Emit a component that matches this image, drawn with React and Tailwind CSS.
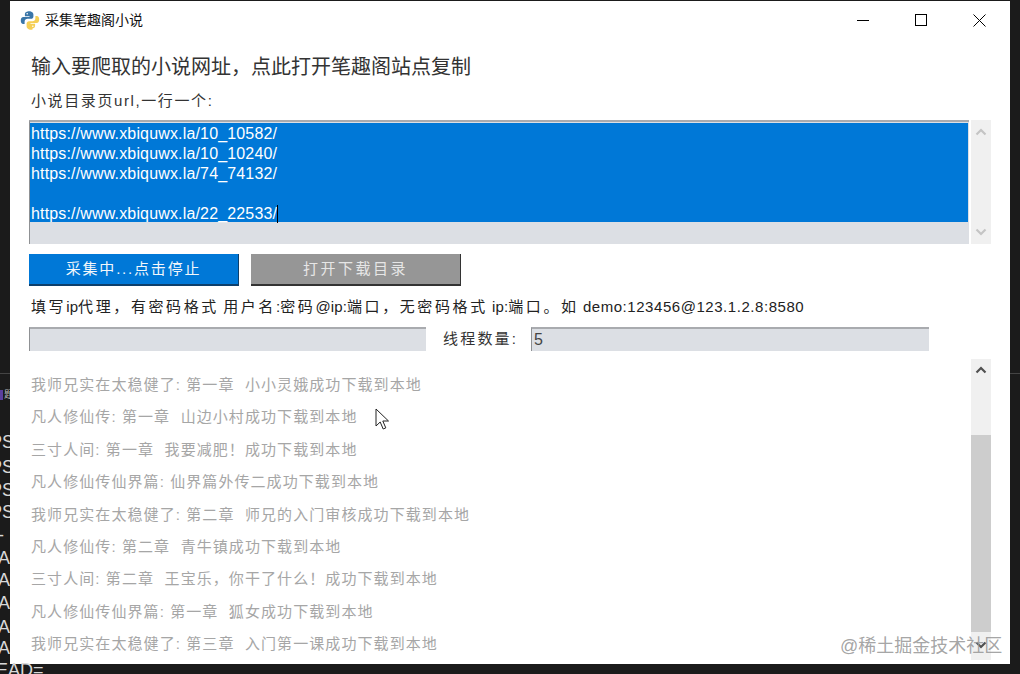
const cjk = "font-['Liberation_Sans','Noto_Sans_CJK_SC',sans-serif]";

const logLines = [
  "我师兄实在太稳健了: 第一章  小小灵娥成功下载到本地",
  "凡人修仙传: 第一章  山边小村成功下载到本地",
  "三寸人间: 第一章  我要减肥！成功下载到本地",
  "凡人修仙传仙界篇: 仙界篇外传二成功下载到本地",
  "我师兄实在太稳健了: 第二章  师兄的入门审核成功下载到本地",
  "凡人修仙传: 第二章  青牛镇成功下载到本地",
  "三寸人间: 第二章  王宝乐，你干了什么！成功下载到本地",
  "凡人修仙传仙界篇: 第一章  狐女成功下载到本地",
  "我师兄实在太稳健了: 第三章  入门第一课成功下载到本地",
];

const urls = [
  "https://www.xbiquwx.la/10_10582/",
  "https://www.xbiquwx.la/10_10240/",
  "https://www.xbiquwx.la/74_74132/",
  "",
  "https://www.xbiquwx.la/22_22533/",
];

const termRows = [
  ["PS", "h-[24px] -ml-[10px]"],
  ["PS", "h-[26px] -ml-[10px]"],
  ["PS", "h-[20px] -ml-[10px]"],
  ["PS", "h-[24px] -ml-[10px]"],
  ["-", "h-[22px] -ml-[2px]"],
  ["A", "h-[24px] -ml-[2px]"],
  ["A", "h-[20px] -ml-[2px]"],
  ["A", "h-[26px] -ml-[2px]"],
  ["A", "h-[22px] -ml-[2px]"],
  ["A", "h-[20px] -ml-[2px]"],
];

function PythonLogo() {
  return (
    <svg viewBox="0 0 20 20" className="h-[20px] w-[20px] shrink-0">
      <path d="M7.500 1.500c-2 .4-2.600 1.400-2.600 3v1.800h4.600v.8H3.400C1.600 7.100.8 8.600.8 10.500c0 2 .8 3.500 2.400 3.500h1.400v-2.200c0-1.700 1.400-3 3-3h3.400c1.300 0 2.400-1.100 2.400-2.400V4.500c0-1.400-1.200-2.600-2.600-3-1.100-.3-2.300-.2-3.300 0z" fill="#3a76a8" />
      <circle cx="7.200" cy="3.800" r="0.800" fill="#fff" />
      <path d="M12.500 18.500c2-.4 2.600-1.400 2.600-3v-1.800h-4.600v-.8h6.100c1.800 0 2.600-1.500 2.600-3.400 0-2-.8-3.500-2.400-3.500h-1.400v2.200c0 1.700-1.400 3-3 3H9c-1.300 0-2.400 1.100-2.400 2.400v2.900c0 1.400 1.200 2.600 2.600 3 1.100.3 2.300.2 3.300 0z" fill="#f5cf55" />
      <circle cx="12.800" cy="16.200" r="0.800" fill="#fff" />
    </svg>
  );
}

function Chevron({ down, color }) {
  return (
    <svg viewBox="0 0 12 8" className="h-[8px] w-[12px]" fill="none" stroke={color} strokeWidth="2.200">
      <path d={down ? "M1.500 1.500 6 6l4.500-4.500" : "M1.500 6.500 6 2l4.500 4.500"} />
    </svg>
  );
}

function GrayInput({ value, width }) {
  return (
    <div className={`h-[24px] ${width} border-t-2 border-l border-t-[#a9abaf] border-l-[#8f9194] bg-[#dcdfe4] pl-[2px] font-['Liberation_Sans',sans-serif] text-[16px] leading-[22px] text-[#444]`}>
      {value}
    </div>
  );
}

// CJK runs in this line sit wider apart than the latin ones
function Wide({ children }) {
  return <span className="tracking-[2.600px]">{children}</span>;
}

export default function App() {
  return (
    <div className={`relative flex h-[674px] w-[1020px] overflow-hidden bg-[#1b1b1b] ${cjk}`}>
      {/* terminal peeking out on the left */}
      <div className="flex w-[10px] shrink-0 flex-col overflow-hidden pt-[373px]">
        <div className="h-px w-full bg-[#444]" />
        <div className="mt-[16px] flex h-[10px] items-center gap-px">
          <div className="h-[10px] w-[3px] shrink-0 bg-[#5a3f9e]" />
          <span className="whitespace-nowrap text-[10px] leading-none text-[#b8b8b8]">题</span>
        </div>
        <div className="mt-[30px] flex flex-col text-[18px] text-[#d8d8d8]">
          {termRows.map(([t, h], i) => (
            <div key={i} className={`${h} flex items-center whitespace-nowrap leading-none`}>{t}</div>
          ))}
        </div>
      </div>

      <div className="mt-px flex h-[663px] w-[1000px] shrink-0 flex-col bg-white">
        {/* title bar */}
        <div className="flex h-[38px] shrink-0 items-center pl-[10px] pr-[2px]">
          <PythonLogo />
          <span className="ml-[5px] text-[14px] leading-none text-[#111]">采集笔趣阁小说</span>
          <div className="ml-auto flex h-full items-center">
            <div className="flex h-full w-[58px] items-center justify-center">
              <div className="h-px w-[12px] bg-black" />
            </div>
            <div className="flex h-full w-[58px] items-center justify-center">
              <div className="h-[12px] w-[12px] border border-black" />
            </div>
            <div className="flex h-full w-[58px] items-center justify-center">
              <svg viewBox="0 0 13 13" className="h-[13px] w-[13px]" stroke="#000" strokeWidth="1">
                <path d="M.500.500l12 12M12.500.500l-12 12" />
              </svg>
            </div>
          </div>
        </div>

        <div className="flex min-h-0 flex-1 flex-col pl-[19px]">
          <div className="ml-[2px] mt-[14px] h-[28px] text-[20px] leading-[28px] text-[#333]">
            输入要爬取的小说网址，点此打开笔趣阁站点复制
          </div>
          <div className="ml-[2px] mt-[9px] h-[22px] text-[15px] leading-[22px] tracking-[1.600px] text-[#333]">
            小说目录页url,一行一个:
          </div>

          {/* url box */}
          <div className="mt-[8px] flex h-[124px] gap-[2px]">
            <div className="flex h-full w-[940px] flex-col border-t-2 border-l border-t-[#a9abaf] border-l-[#8f9194] bg-[#dcdfe4]">
              <div className="mr-px mt-px h-[99px] bg-[#0078d7] pl-[1px] pt-[1px] font-['Liberation_Sans',sans-serif] text-[16px] leading-[20px] tracking-[0.160px] text-white">
                {urls.map((u, i) => (
                  <div key={i} className="flex h-[20px] items-center">
                    {u}
                    {i === 4 && <span className="h-[18px] w-px bg-black" />}
                  </div>
                ))}
              </div>
            </div>
            <div className="flex h-full w-[20px] flex-col items-center justify-between bg-[#f0f0f0] py-[8px]">
              <Chevron color="#c4c4c4" />
              <Chevron down color="#c4c4c4" />
            </div>
          </div>

          {/* buttons */}
          <div className="mt-[10px] flex h-[32px] gap-[12px]">
            <button className="h-full w-[210px] border-r border-b-2 border-r-[#0d3f6b] border-b-[#0d3f6b] bg-[#0078d7] text-[15px] tracking-[1.800px] text-[#f2f7fb]">
              采集中...点击停止
            </button>
            <button className="h-full w-[210px] border-r border-b-2 border-r-[#333] border-b-[#333] bg-[#969696] text-[15px] tracking-[2.500px] text-[#e6e6e6]">
              打开下载目录
            </button>
          </div>

          <div className="ml-[2px] mt-[10px] h-[22px] whitespace-nowrap text-[15px] leading-[22px] tracking-[0.100px] text-[#222]">
            <Wide>填写</Wide>ip<Wide>代理，有密码格式</Wide> <Wide>用户名</Wide>:<Wide>密码</Wide>@ip:<Wide>端口，无密码格式</Wide> ip:<Wide>端口。如</Wide> <span className="tracking-[0.550px]">demo:123456@123.1.2.8:8580</span>
          </div>

          {/* proxy + threads */}
          <div className="mt-[9px] flex h-[24px] items-center">
            <GrayInput width="w-[397px]" />
            <span className="ml-[17px] w-[88px] whitespace-nowrap text-[15px] tracking-[2.200px] text-[#333]">线程数量:</span>
            <GrayInput width="w-[398px]" value="5" />
          </div>

          {/* log */}
          <div className="mt-[8px] flex min-h-0 flex-1">
            <div className="flex w-[942px] flex-col overflow-hidden pl-[2px] pt-[10px]">
              {logLines.map((line) => (
                <div key={line} className="h-[32.400px] shrink-0 whitespace-pre text-[15px] leading-[32px] tracking-[1.080px] text-[#a6a6a6]">
                  {line}
                </div>
              ))}
            </div>
            <div className="flex h-[301px] w-[20px] flex-col bg-[#f0f0f0]">
              <div className="flex h-[76px] justify-center pt-[7px]">
                <Chevron color="#505050" />
              </div>
              <div className="h-[197px] bg-[#cdcdcd]" />
              <div className="flex flex-1 justify-center pt-[9px]">
                <Chevron down color="#505050" />
              </div>
            </div>
          </div>
        </div>
      </div>

      <div className="flex w-[10px] shrink-0 flex-col pt-[373px]">
        <div className="h-px w-full bg-[#444]" />
      </div>

      {/* terminal text under the window */}
      <div className="absolute left-[-4px] top-[661px] font-['Liberation_Sans',sans-serif] text-[18px] leading-none text-[#d8d8d8]">EAD=</div>

      {/* mouse pointer */}
      <svg viewBox="0 0 16 23" className="absolute left-[375px] top-[408px] h-[23px] w-[16px]" fill="#fff" stroke="#222" strokeWidth="1">
        <path d="M1 1v17l4.200-4 3 7 2.600-1.100-3-6.900H13.500z" />
      </svg>

      {/* watermark */}
      <div className="absolute left-[840px] top-[635px] whitespace-nowrap text-[18px] leading-[22px] text-[#9a9a9a]/90">
        @稀土掘金技术社区
      </div>
    </div>
  );
}
